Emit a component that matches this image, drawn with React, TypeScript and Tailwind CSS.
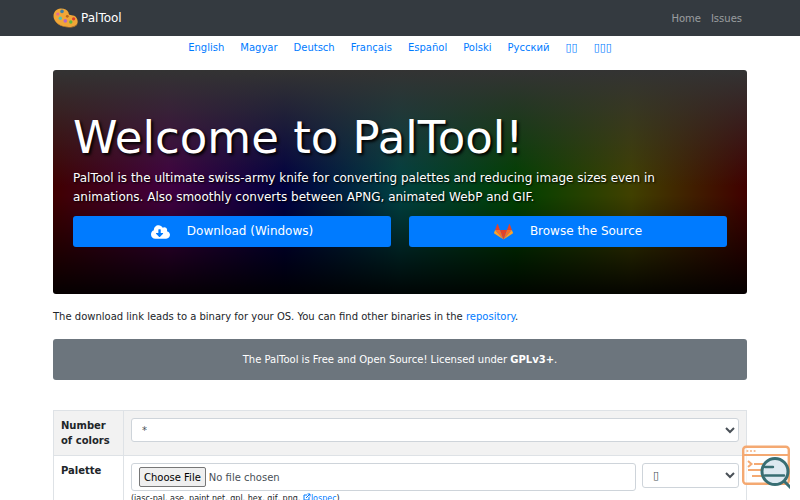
import React from "react";

const languages = ["English", "Magyar", "Deutsch", "Français", "Español", "Polski", "Русский"];
const boxedLanguages = ["▯▯", "▯▯▯"];

function PaletteLogo() {
  return (
    <svg className="h-[20px] w-[25px]" viewBox="0 0 25 20" aria-hidden="true">
      <path
        d="M7.500 .5C11 .3 14.500 1.800 15.500 4.500c.3 1 .2 1.700.9 2.200 1.400.7 3.200.2 4.900 1.100 2.400 1.400 3.700 4.200 3.300 6.700-.5 3-4.300 4.700-9 4.500C8.500 18.900 2.500 15.700.9 10.500-.6 5.500 2.500.8 7.500.5z"
        fill="#f0a637"
      />
      <path d="M1 10.500c2 5 8 8.200 14.800 8.400 4.600.2 8.300-1.400 9-4.200-.2 3.200-4 5.100-9 4.900C8.500 19.300 2.600 15.700 1 10.500z" fill="#c9812b" />
      <circle cx="9" cy="3.400" r="1.800" fill="#3c7fa8" />
      <circle cx="4.800" cy="6" r="1.600" fill="#e0699b" />
      <circle cx="7.300" cy="10.300" r="1.700" fill="#4fc3b5" />
      <circle cx="12.300" cy="12.900" r="1.800" fill="#b566c9" />
      <circle cx="17.800" cy="14" r="1.700" fill="#5fb83f" />
      <circle cx="20.600" cy="10.800" r="1.600" fill="#dc3a2a" />
      <circle cx="14.300" cy="8.300" r="1.400" fill="#b5651d" />
    </svg>
  );
}

function CloudDownload() {
  return (
    <svg className="h-[16px] w-[19px]" viewBox="0 0 640 512" fill="currentColor" aria-hidden="true">
      <path d="M537.600 226.600c4.100-10.700 6.400-22.400 6.400-34.600 0-53-43-96-96-96-19.700 0-38.100 6-53.300 16.200C367 64.200 315.300 32 256 32c-88.400 0-160 71.600-160 160 0 2.700.1 5.400.2 8.100C40.200 219.800 0 273.200 0 336c0 79.500 64.500 144 144 144h368c70.700 0 128-57.300 128-128 0-61.900-44-113.600-102.400-125.400zm-132.900 88.700L299.300 420.700c-6.200 6.200-16.400 6.200-22.600 0L171.300 315.300c-10.100-10.100-2.900-27.300 11.300-27.300H248V176c0-8.800 7.200-16 16-16h48c8.800 0 16 7.200 16 16v112h65.400c14.200 0 21.400 17.200 11.300 27.300z" />
    </svg>
  );
}

function GitlabLogo() {
  return (
    <svg className="h-[16px] w-[19px]" viewBox="0 0 586 559" preserveAspectRatio="none" aria-hidden="true">
      <path d="M293 540L401 208H185z" fill="#e24329" />
      <path d="M293 540L185 208H34z" fill="#fc6d26" />
      <path d="M34 208L1 309c-3 9 0 19 8 25l284 206z" fill="#fca326" />
      <path d="M34 208h151L120 8c-3-10-18-10-21 0z" fill="#e24329" />
      <path d="M293 540l108-332h151z" fill="#fc6d26" />
      <path d="M552 208l33 101c3 9 0 19-8 25L293 540z" fill="#fca326" />
      <path d="M552 208H401L466 8c3-10 18-10 21 0z" fill="#e24329" />
    </svg>
  );
}

function InspectorBadge() {
  return (
    <svg className="h-[44px] w-[48px]" viewBox="0 0 48 44" fill="none" aria-hidden="true">
      <rect x="1.200" y="1.700" width="45.600" height="37" rx="3" fill="#fff" fillOpacity=".6" stroke="#f4a972" strokeWidth="2.400" />
      <path d="M1 10h46" stroke="#f4a972" strokeWidth="2.200" />
      <path d="M4.500 6h9" stroke="#f4a972" strokeWidth="1.500" strokeDasharray="1.800 1.800" />
      <path d="M6 16l3.500 3L6 22M12 19h9M6 25h15M10 31h12" stroke="#f4a972" strokeWidth="2" />
      <path d="M42 36l7 7" stroke="#386e73" strokeWidth="3" />
      <circle cx="33" cy="26.500" r="13" fill="#dde9f1" stroke="#386e73" strokeWidth="3" />
      <path d="M23 22h8M23 30.500h19" stroke="#386e73" strokeWidth="2.400" strokeLinecap="round" />
    </svg>
  );
}

function ExternalIcon() {
  return (
    <svg className="inline h-[8px] w-[8px] align-baseline" viewBox="0 0 8 8" fill="none" stroke="currentColor" aria-hidden="true">
      <path d="M4 2H1v5h5V4M3 5l4-4M4.500 1H7v2.500" />
    </svg>
  );
}

const field = "rounded-[3px] border border-[#ced4da] bg-white text-[#495057]";
const cell = "border border-[#dee2e6] p-[7px] align-top";
const heroButton =
  "flex h-[31px] items-center justify-center gap-[17px] rounded-[3px] bg-[#007bff] text-[12px] text-white";
const link = "text-[#007bff]";

export default function App() {
  return (
    <div className="bg-white font-['DejaVu_Sans',sans-serif] text-[10px] leading-[15px] text-[#212529]">
      <header className="bg-[#343a40]">
        <nav className="mx-auto flex h-[36px] max-w-[712px] items-center justify-between px-[9px]">
          <a href="#" className="flex items-center gap-[3px] text-[12px] text-white">
            <PaletteLogo />
            PalTool
          </a>
          <div className="flex gap-[10px] pr-[5px] text-white/50">
            <a href="#home">Home</a>
            <a href="#issues">Issues</a>
          </div>
        </nav>
      </header>

      <main className="mx-auto max-w-[712px] px-[9px]">
        <ul className="flex justify-center gap-[16px] pt-[4px]">
          {languages.map((name) => (
            <li key={name}>
              <a href="#lang" className={link}>{name}</a>
            </li>
          ))}
          {boxedLanguages.map((name) => (
            <li key={name} className="text-[11px]">
              <a href="#lang" className={link}>{name}</a>
            </li>
          ))}
        </ul>

        <section className="mt-[15px] rounded-[3px] bg-[linear-gradient(to_bottom,#333_0%,#3330_52%,#0000_56%,#000_104%),linear-gradient(to_right,#400000,#400040,#000040,#004040,#004000,#404000,#400000)] px-[20px] pt-[41px] pb-[47px] text-white">
          <h1 className="mb-[4px] text-[45px] leading-[54px] [text-shadow:2px_2px_3px_#000]">Welcome to PalTool!</h1>
          <p className="mb-[9px] text-[12px] leading-[19px] [text-shadow:1px_1px_2px_#000]">
            PalTool is the ultimate swiss-army knife for converting palettes and reducing image sizes even in animations.
            Also smoothly converts between APNG, animated WebP and GIF.
          </p>
          <div className="grid grid-cols-2 gap-[18px]">
            <a href="#download" className={heroButton}>
              <CloudDownload />
              Download (Windows)
            </a>
            <a href="#source" className={heroButton}>
              <GitlabLogo />
              Browse the Source
            </a>
          </div>
        </section>

        <p className="mt-[15px]">
          The download link leads to a binary for your OS. You can find other binaries in the{" "}
          <a href="#repository" className={link}>repository</a>.
        </p>

        <p className="mt-[15px] rounded-[3px] bg-[#6c757d] py-[13px] text-center text-white">
          The PalTool is Free and Open Source! Licensed under <b>GPLv3+</b>.
        </p>

        <table className="mt-[30px] w-full border-collapse">
          <tbody>
            <tr className="bg-[#f2f2f2]">
              <th scope="row" className={`${cell} w-[70px] text-left font-bold`}>
                <label htmlFor="colors">Number of colors</label>
              </th>
              <td className={cell}>
                <select id="colors" className={`${field} h-[24px] w-full px-[6px]`}>
                  <option>*</option>
                </select>
              </td>
            </tr>
            <tr>
              <th scope="row" className={`${cell} text-left font-bold`}>
                <label htmlFor="palette">Palette</label>
              </th>
              <td className={cell}>
                <div className="flex items-start gap-[6px]">
                  <input
                    id="palette"
                    type="file"
                    className={`${field} h-[28px] min-w-0 flex-1 px-[7px] py-[3px] file:mr-[3px] file:h-[20px] file:rounded-[2px] file:border file:border-solid file:border-[#767676] file:bg-[#efefef] file:px-[4px] file:text-black`}
                  />
                  <select aria-label="Palette source" className={`${field} h-[25px] w-[97px] px-[6px] text-[11px]`}>
                    <option>▯</option>
                  </select>
                </div>
                <p className="text-[8px] leading-[15px]">
                  (jasc-pal, ase, paint.net, gpl, hex, gif, png,{" "}
                  <a href="#lospec" className={link}>
                    <ExternalIcon />
                    lospec
                  </a>
                  )
                </p>
              </td>
            </tr>
          </tbody>
        </table>
      </main>

      <aside className="fixed right-[10px] bottom-[11px]">
        <InspectorBadge />
      </aside>
    </div>
  );
}
